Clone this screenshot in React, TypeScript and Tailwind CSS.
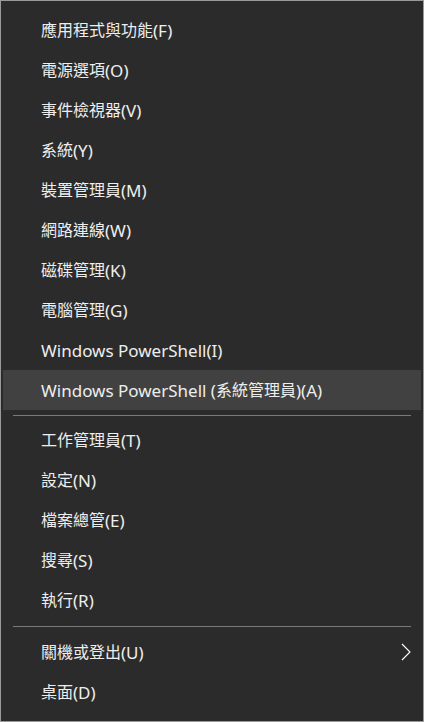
import React from "react";

const group1 = [
  "應用程式與功能(F)",
  "電源選項(O)",
  "事件檢視器(V)",
  "系統(Y)",
  "裝置管理員(M)",
  "網路連線(W)",
  "磁碟管理(K)",
  "電腦管理(G)",
  "Windows PowerShell(I)",
  "Windows PowerShell (系統管理員)(A)",
];
const group2 = ["工作管理員(T)", "設定(N)", "檔案總管(E)", "搜尋(S)", "執行(R)"];

function Label({ text }: { text: string }) {
  const parts = text.split(/([\u3400-\u9fff]+)/).filter((p) => p.length > 0);
  return (
    <span className="flex-1 flex items-center leading-none text-[#eeeeee] whitespace-pre">
      {parts.map((p, i) =>
        /[\u3400-\u9fff]/.test(p) ? (
          <span key={i} className="text-[16px]">{p}</span>
        ) : (
          <span key={i} className="text-[17px]">{p}</span>
        )
      )}
    </span>
  );
}

function Item({ label, active, sub }: { label: string; active?: boolean; sub?: boolean }) {
  return (
    <div className={"h-10 flex items-center pl-[38px] pr-[10px] " + (active ? "bg-[#414141]" : "")}>
      <Label text={label} />
      {sub && (
        <svg width="10" height="18" viewBox="0 0 10 18">
          <path d="M1 1 L9 9 L1 17" fill="none" stroke="#ffffff" strokeWidth="1.1" />
        </svg>
      )}
    </div>
  );
}

export default function App() {
  return (
    <div
      className="w-[424px] h-[722px] bg-[#2b2b2b] border border-[#9a9a9a] px-[2px] pt-[9px]"
      style={{ fontFamily: '"Noto Sans", "Noto Sans CJK TC", sans-serif' }}
    >
      {group1.map((l, i) => (
        <Item key={l} label={l} active={i === group1.length - 1} />
      ))}
      <div className="h-[10px] flex items-center px-[10px]">
        <div className="h-px w-full bg-[#7a7a7a]" />
      </div>
      {group2.map((l) => (
        <Item key={l} label={l} />
      ))}
      <div className="h-[12px] flex items-center px-[10px]">
        <div className="h-px w-full bg-[#7a7a7a]" />
      </div>
      <Item label="關機或登出(U)" sub />
      <Item label="桌面(D)" />
    </div>
  );
}
